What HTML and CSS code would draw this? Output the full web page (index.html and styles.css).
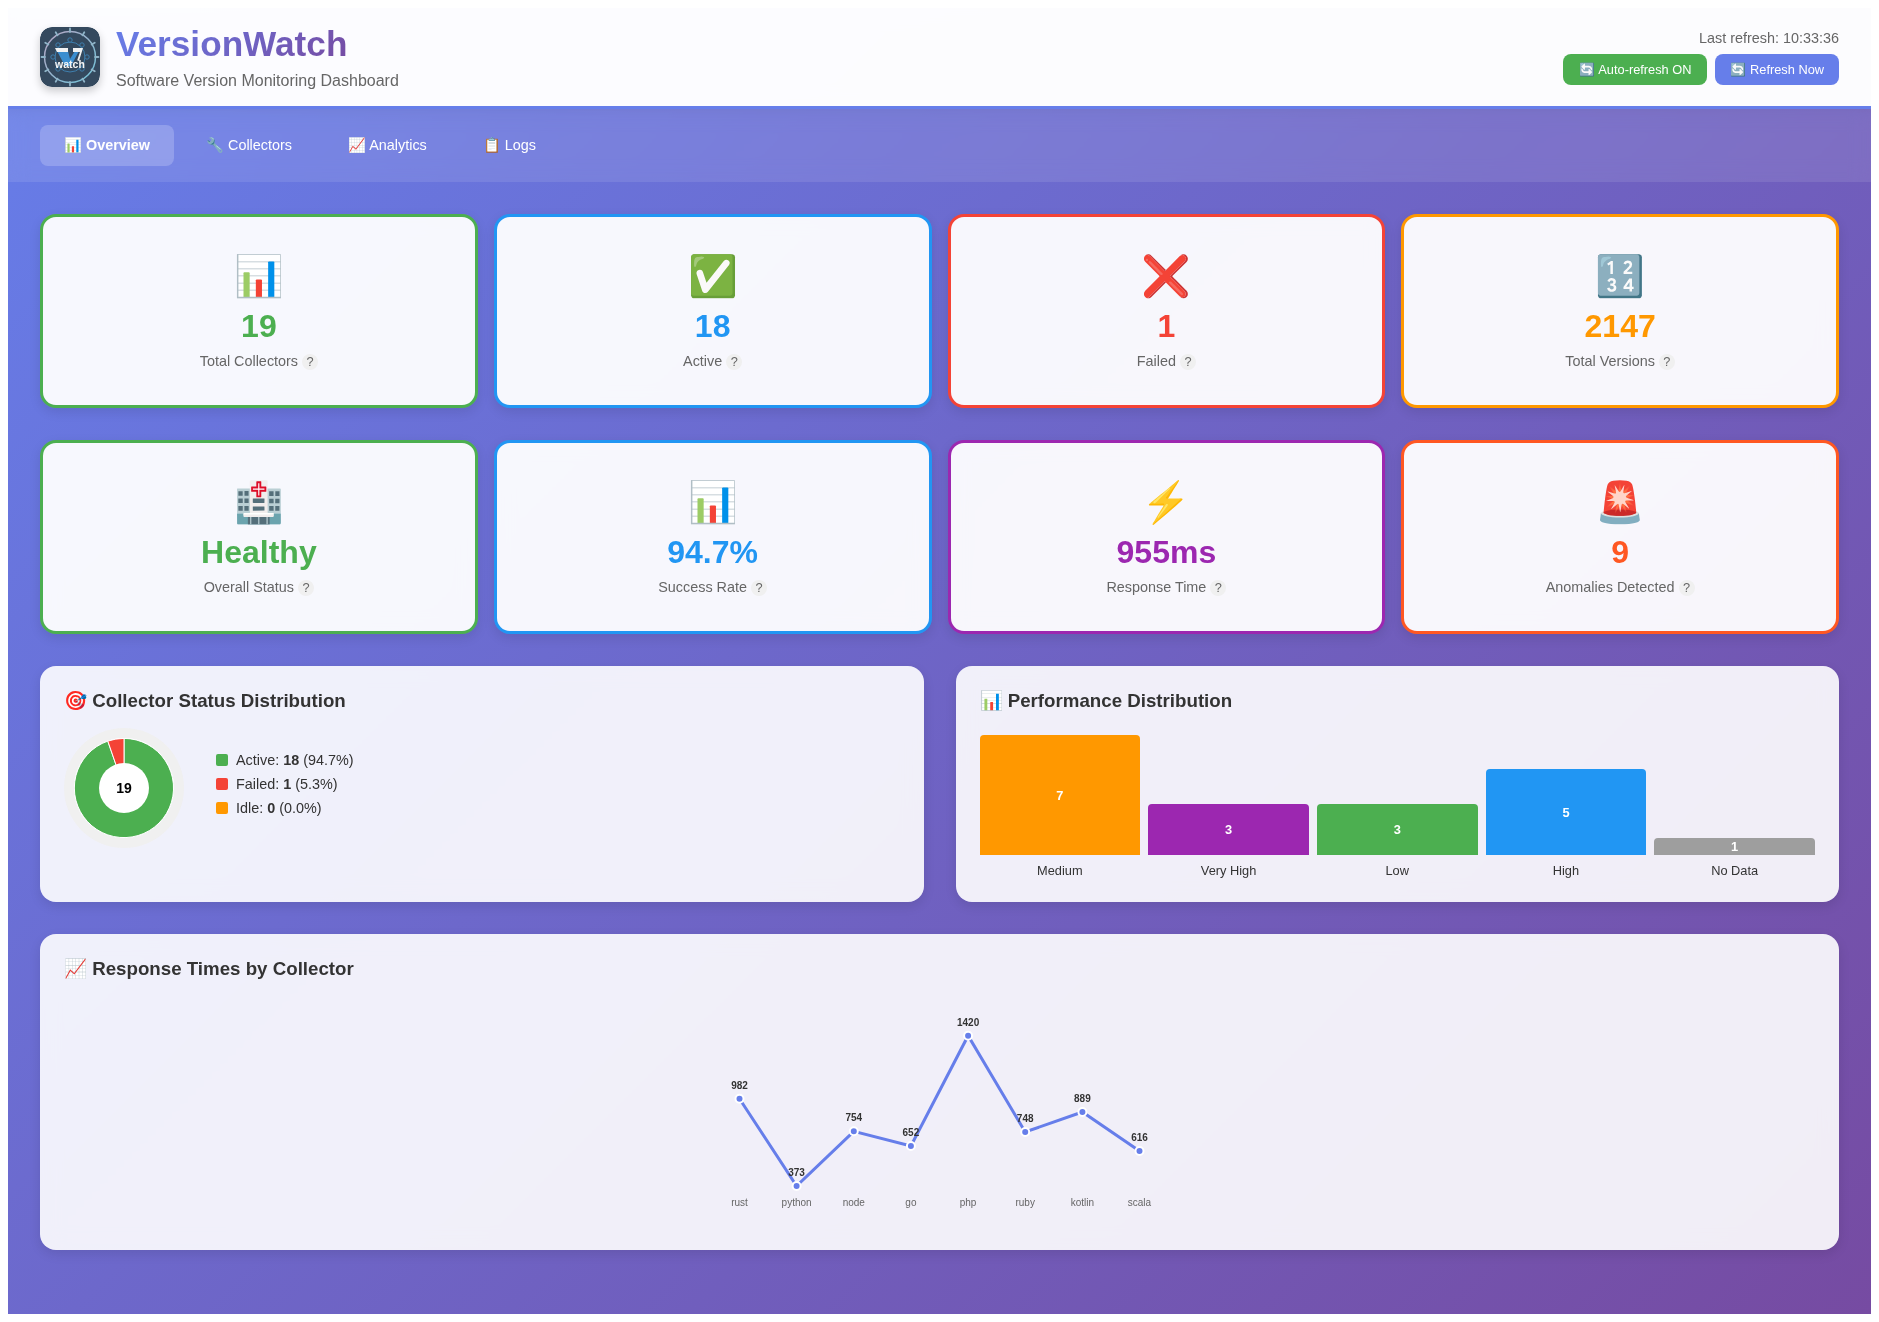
FILE: index.html
```html
<!DOCTYPE html>
<html lang="en">
<head>
<meta charset="utf-8">
<title>VersionWatch</title>
<link rel="stylesheet" href="styles.css">
</head>
<body>
<div class="app">
  <header class="header">
    <div class="brand">
      <svg class="logo" viewBox="0 0 60 60" aria-hidden="true">
        <defs>
          <linearGradient id="ring" x1="0" y1="0" x2="1" y2="1">
            <stop offset="0" stop-color="#b9a6c4"/>
            <stop offset="1" stop-color="#6fc3d8"/>
          </linearGradient>
        </defs>
        <rect width="60" height="60" rx="12" fill="#34495e"/>
        <circle cx="30" cy="30" r="25.5" fill="none" stroke="url(#ring)" stroke-width="1.5"/>
        <path fill="none" stroke="#8fb4c8" stroke-width="1.8" stroke-linecap="round" d="M30 5V1.500M42.500 8.350l1.800-3.100M51.650 17.500l3.100-1.800M55 30h3.500M51.650 42.500l3.100 1.800M42.500 51.650l1.800 3.100M30 55v3.500M17.500 51.650l-1.800 3.100M8.350 42.500l-3.100 1.800M5 30H1.500M8.350 17.500l-3.100-1.800M17.500 8.350l-1.800-3.100"/>
        <circle cx="30" cy="30" r="15" fill="none" stroke="#3f7fae" stroke-width="1"/>
        <g fill="#34495e" stroke="#3f7fae" stroke-width="1">
          <circle cx="30" cy="13" r="2.200"/><circle cx="42" cy="18" r="2.200"/><circle cx="18" cy="18" r="2.200"/>
          <circle cx="13" cy="30" r="2.200"/><circle cx="47" cy="30" r="2.200"/><circle cx="42" cy="42" r="2.200"/><circle cx="18" cy="42" r="2.200"/>
        </g>
        <path d="M17 24h11l2 8 5-8h4l-8 15h-6z" fill="#3b8ed0"/>
        <path d="M15 21h13v4H17zM33 21h10l-4 13-1.800-.8 2.800-8.200h-7z" fill="#f2f2f2"/>
        <text class="logo-text" x="30" y="41">watch</text>
      </svg>
      <div class="brand-copy">
        <h1 class="title">VersionWatch</h1>
        <p class="subtitle">Software Version Monitoring Dashboard</p>
      </div>
    </div>
    <div class="controls">
      <div class="refresh-time">Last refresh: 10:33:36</div>
      <div class="buttons">
        <button class="btn btn-green">🔄 Auto-refresh ON</button>
        <button class="btn btn-blue">🔄 Refresh Now</button>
      </div>
    </div>
  </header>

  <nav class="tabs">
    <a class="tab tab-active">📊 Overview</a>
    <a class="tab">🔧 Collectors</a>
    <a class="tab">📈 Analytics</a>
    <a class="tab">📋 Logs</a>
  </nav>

  <main class="content">
    <section class="stats">
      <div class="stat stat-green"><div class="stat-icon">📊</div><div class="stat-value">19</div><div class="stat-label">Total Collectors <span class="help">?</span></div></div>
      <div class="stat stat-blue"><div class="stat-icon">✅</div><div class="stat-value">18</div><div class="stat-label">Active <span class="help">?</span></div></div>
      <div class="stat stat-red"><div class="stat-icon">❌</div><div class="stat-value">1</div><div class="stat-label">Failed <span class="help">?</span></div></div>
      <div class="stat stat-amber"><div class="stat-icon">🔢</div><div class="stat-value">2147</div><div class="stat-label">Total Versions <span class="help">?</span></div></div>
    </section>
    <section class="stats">
      <div class="stat stat-green"><div class="stat-icon">🏥</div><div class="stat-value">Healthy</div><div class="stat-label">Overall Status <span class="help">?</span></div></div>
      <div class="stat stat-blue"><div class="stat-icon">📊</div><div class="stat-value">94.7%</div><div class="stat-label">Success Rate <span class="help">?</span></div></div>
      <div class="stat stat-purple"><div class="stat-icon">⚡</div><div class="stat-value">955ms</div><div class="stat-label">Response Time <span class="help">?</span></div></div>
      <div class="stat stat-orange"><div class="stat-icon">🚨</div><div class="stat-value">9</div><div class="stat-label">Anomalies Detected <span class="help">?</span></div></div>
    </section>

    <section class="charts">
      <div class="panel">
        <h3 class="panel-title">🎯 Collector Status Distribution</h3>
        <div class="donut-row">
          <div class="donut">
            <svg class="donut-svg" viewBox="0 0 100 100" aria-hidden="true">
              <circle cx="50" cy="50" r="50" fill="#fff"/>
              <path d="M50 50V.4A49.600 49.600 0 1 1 33.800 3.100Z" fill="#4caf50" stroke="#fff" stroke-width="1"/>
              <path d="M50 50L33.800 3.100A49.600 49.600 0 0 1 50 .4Z" fill="#f44336" stroke="#fff" stroke-width="1"/>
              <circle cx="50" cy="50" r="25" fill="#fff"/>
              <text class="donut-num" x="50" y="55">19</text>
            </svg>
          </div>
          <ul class="legend">
            <li class="legend-item"><span class="swatch swatch-green"></span><span>Active: <b>18</b> (94.7%)</span></li>
            <li class="legend-item"><span class="swatch swatch-red"></span><span>Failed: <b>1</b> (5.3%)</span></li>
            <li class="legend-item"><span class="swatch swatch-amber"></span><span>Idle: <b>0</b> (0.0%)</span></li>
          </ul>
        </div>
      </div>
      <div class="panel">
        <h3 class="panel-title">📊 Performance Distribution</h3>
        <div class="bars">
          <div class="bar-col"><div class="bar bar-amber" style="height:120px">7</div><div class="bar-label">Medium</div></div>
          <div class="bar-col"><div class="bar bar-purple" style="height:51px">3</div><div class="bar-label">Very High</div></div>
          <div class="bar-col"><div class="bar bar-green" style="height:51px">3</div><div class="bar-label">Low</div></div>
          <div class="bar-col"><div class="bar bar-blue" style="height:86px">5</div><div class="bar-label">High</div></div>
          <div class="bar-col"><div class="bar bar-gray" style="height:17px">1</div><div class="bar-label">No Data</div></div>
        </div>
      </div>
    </section>

    <section class="panel panel-wide">
      <h3 class="panel-title">📈 Response Times by Collector</h3>
      <svg class="line-chart" viewBox="0.5 0 400 240" aria-hidden="true">
        <polyline class="line" points="0,118.700 57.100,206 114.300,151.300 171.400,166 228.600,55.700 285.700,152 342.900,132 400,171"/>
        <g class="dots">
          <circle cx="0" cy="118.700" r="4"/><circle cx="57.100" cy="206" r="4"/><circle cx="114.300" cy="151.300" r="4"/><circle cx="171.400" cy="166" r="4"/>
          <circle cx="228.600" cy="55.700" r="4"/><circle cx="285.700" cy="152" r="4"/><circle cx="342.900" cy="132" r="4"/><circle cx="400" cy="171" r="4"/>
        </g>
        <g class="vals">
          <text x="0" y="109">982</text><text x="57.100" y="196">373</text><text x="114.300" y="141">754</text><text x="171.400" y="156">652</text>
          <text x="228.600" y="46">1420</text><text x="285.700" y="142">748</text><text x="342.900" y="122">889</text><text x="400" y="161">616</text>
        </g>
        <g class="axis">
          <text x="0" y="226">rust</text><text x="57.100" y="226">python</text><text x="114.300" y="226">node</text><text x="171.400" y="226">go</text>
          <text x="228.600" y="226">php</text><text x="285.700" y="226">ruby</text><text x="342.900" y="226">kotlin</text><text x="400" y="226">scala</text>
        </g>
      </svg>
    </section>
  </main>
</div>
</body>
</html>
```
FILE: styles.css
```css
* { box-sizing: border-box; }
body { margin: 8px; background: #fff; font-family: "Liberation Sans", Arial, sans-serif; color: #333; }
.app { min-height: 1306px; background: linear-gradient(135deg, #667eea 0%, #764ba2 100%); }
.header { height: 101px; padding: 0 32px; display: flex; justify-content: space-between; align-items: center; background: rgba(255,255,255,.98); border-bottom: 3px solid #667eea; box-shadow: 0 2px 10px rgba(0,0,0,.1); position: relative; backdrop-filter: blur(10px); }
.brand { display: flex; align-items: center; gap: 16px; }
.logo { width: 60px; height: 60px; border-radius: 12px; box-shadow: 0 4px 8px rgba(0,0,0,.2); display: block; }
.logo-text { font: bold 10.5px "Liberation Sans", sans-serif; fill: #f5f5f5; text-anchor: middle; }
.title { margin: 0; font-size: 35.2px; line-height: 40px; font-weight: 700; background: linear-gradient(135deg, #667eea, #764ba2); -webkit-background-clip: text; background-clip: text; color: transparent; width: max-content; }
.subtitle { margin: 8px 0 0; font-size: 16px; line-height: 18px; color: #666; }
.controls { display: flex; flex-direction: column; align-items: flex-end; gap: 8px; }
.refresh-time { font-size: 14.4px; line-height: 16px; color: #666; }
.buttons { display: flex; gap: 8px; }
.btn { height: 31px; padding: 0 16px; border: 0; border-radius: 8px; font: 12.8px "Liberation Sans", sans-serif; color: #fff; }
.btn-green { background: #4caf50; }
.btn-blue { background: #667eea; padding: 0 15px; }
.tabs { display: flex; gap: 8px; padding: 16px 32px; height: 73px; background: rgba(255,255,255,.1); backdrop-filter: blur(10px); }
.tab { height: 41px; padding: 0 24px; display: flex; align-items: center; border-radius: 8px; font-size: 14.4px; color: #fff; white-space: pre; }
.tab-active { background: rgba(255,255,255,.2); font-weight: 700; }
.content { padding: 32px; display: flex; flex-direction: column; gap: 32px; }
.stats { display: grid; grid-template-columns: repeat(4, 1fr); gap: 16px; }
.stat { height: 194px; border: 3px solid; border-radius: 16px; background: rgba(255,255,255,.95); box-shadow: 0 4px 12px rgba(0,0,0,.1); display: flex; flex-direction: column; align-items: center; padding-top: 32px; backdrop-filter: blur(10px); }
.stat-icon { font-size: 40px; line-height: 54px; }
.stat-value { margin-top: 5px; font-size: 32px; line-height: 37px; font-weight: 700; }
.stat-label { margin-top: 8px; font-size: 14.4px; line-height: 17px; color: #666; }
.help { display: inline-block; width: 16px; height: 16px; border-radius: 50%; background: #f0f0f0; font-size: 12.8px; line-height: 16px; text-align: center; }
.stat-green { border-color: #4caf50; } .stat-green .stat-value { color: #4caf50; }
.stat-blue { border-color: #2196f3; } .stat-blue .stat-value { color: #2196f3; }
.stat-red { border-color: #f44336; } .stat-red .stat-value { color: #f44336; }
.stat-amber { border-color: #ff9800; } .stat-amber .stat-value { color: #ff9800; }
.stat-purple { border-color: #9c27b0; } .stat-purple .stat-value { color: #9c27b0; }
.stat-orange { border-color: #ff5722; } .stat-orange .stat-value { color: #ff5722; }
.charts { display: grid; grid-template-columns: 1fr 1fr; gap: 32px; }
.panel { height: 236px; padding: 24px; border-radius: 16px; background: rgba(255,255,255,.9); box-shadow: 0 4px 12px rgba(0,0,0,.1); backdrop-filter: blur(10px); }
.panel-wide { height: 316px; }
.panel-title { margin: 0; font-size: 18.72px; line-height: 22px; font-weight: 700; color: #333; }
.donut-row { display: flex; align-items: flex-start; gap: 42px; margin-top: 26px; padding-left: 10px; }
.donut { width: 100px; height: 100px; border-radius: 50%; box-shadow: 0 0 0 10px #f0f0f0; flex: none; }
.donut-svg { display: block; width: 100px; height: 100px; }
.donut-num { font: bold 14px "Liberation Sans", sans-serif; fill: #000; text-anchor: middle; }
.legend { list-style: none; margin: 14px 0 0; padding: 0; display: flex; flex-direction: column; gap: 8px; }
.legend-item { display: flex; align-items: center; gap: 8px; font-size: 14.4px; line-height: 16px; color: #333; }
.swatch { width: 12px; height: 12px; border-radius: 2px; }
.swatch-green { background: #4caf50; } .swatch-red { background: #f44336; } .swatch-amber { background: #ff9800; }
.bars { display: grid; grid-template-columns: repeat(5, 1fr); gap: 8px; margin-top: 17px; height: 149px; }
.bar-col { display: flex; flex-direction: column; justify-content: flex-end; align-items: stretch; }
.bar { display: flex; align-items: center; justify-content: center; border-radius: 4px 4px 0 0; color: #fff; font-size: 12.8px; font-weight: 700; }
.bar-label { margin-top: 8px; font-size: 12.8px; line-height: 15px; text-align: center; color: #333; }
.bar-amber { background: #ff9800; } .bar-purple { background: #9c27b0; } .bar-green { background: #4caf50; } .bar-blue { background: #2196f3; } .bar-gray { background: #9e9e9e; }
.line-chart { display: block; margin: 0 auto; width: 400px; height: 240px; overflow: visible; }
.line { fill: none; stroke: #667eea; stroke-width: 3; }
.dots circle { fill: #667eea; stroke: #fff; stroke-width: 2; }
.vals text { font: bold 10px "Liberation Sans", sans-serif; fill: #333; text-anchor: middle; }
.axis text { font: 10px "Liberation Sans", sans-serif; fill: #666; text-anchor: middle; }
```
